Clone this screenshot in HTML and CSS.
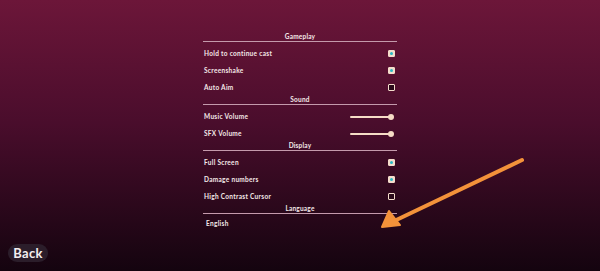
FILE: index.html
```html
<!DOCTYPE html>
<html lang="en">
<head>
    <meta charset="UTF-8">
    <meta name="viewport" content="width=device-width, initial-scale=1.0">
    <title>Settings</title>
    <link rel="stylesheet" href="styles.css">
</head>
<body>
    <div class="panel">
        <div class="section-title">Gameplay</div>
        <div class="section">
            <div class="row"><span>Hold to continue cast</span><span class="check on"></span></div>
            <div class="row"><span>Screenshake</span><span class="check on"></span></div>
            <div class="row"><span>Auto Aim</span><span class="check"></span></div>
        </div>
        <div class="section-title">Sound</div>
        <div class="section">
            <div class="row"><span>Music Volume</span><span class="slider"><span class="knob"></span></span></div>
            <div class="row"><span>SFX Volume</span><span class="slider"><span class="knob"></span></span></div>
        </div>
        <div class="section-title">Display</div>
        <div class="section">
            <div class="row"><span>Full Screen</span><span class="check on"></span></div>
            <div class="row"><span>Damage numbers</span><span class="check on"></span></div>
            <div class="row"><span>High Contrast Cursor</span><span class="check"></span></div>
        </div>
        <div class="section-title">Language</div>
        <div class="section">
            <div class="row lang"><span>English</span></div>
        </div>
    </div>

    <button class="back">Back</button>

    <svg class="arrow" width="600" height="271" viewBox="0 0 600 271">
        <line x1="522" y1="160" x2="390" y2="223" stroke="#f3923a" stroke-width="4" stroke-linecap="round"/>
        <polygon points="382,227 389,211 400,225" fill="#f3923a" stroke="#f3923a" stroke-width="2" stroke-linejoin="round"/>
    </svg>
</body>
</html>
```

FILE: styles.css
```css
body {
    margin: 0;
    width: 600px;
    height: 271px;
    overflow: hidden;
    font-family: Lato, "Open Sans", sans-serif;
    font-weight: bold;
    color: #f4e8e8;
    background: linear-gradient(#6c1639, #4a0d2c 45%, #14040f);
}
.panel {
    width: 194px;
    margin: 0 auto;
    padding-top: 33px;
}
.section-title {
    height: 8px;
    line-height: 8px;
    font-size: 6.5px;
    letter-spacing: 0.2px;
    text-align: center;
    border-bottom: 1px solid #c49aac;
}
.section {
    padding-top: 3px;
}
.section:last-child {
    padding-top: 1px;
}
.row {
    height: 17px;
    display: flex;
    align-items: center;
    justify-content: space-between;
    padding-left: 1px;
    padding-right: 2px;
    font-size: 6.5px;
    letter-spacing: 0.3px;
}
.row.lang {
    padding-left: 3px;
}
.check {
    width: 5px;
    height: 5px;
    border: 1px solid #f4dccb;
    border-radius: 1px;
    background: #2a0a1a;
    position: relative;
}
.check.on {
    background: #f4dccb;
}
.check.on::after {
    content: "";
    position: absolute;
    left: 1px;
    top: 1px;
    width: 3px;
    height: 3px;
    border-radius: 50%;
    background: #27b9c4;
}
.slider {
    width: 42px;
    height: 2px;
    background: #f6dcc6;
    border-radius: 1px;
    position: relative;
    margin-right: 3px;
}
.knob {
    position: absolute;
    right: -2px;
    top: -2px;
    width: 6px;
    height: 6px;
    border-radius: 50%;
    background: #f6dcc6;
}
.back {
    position: absolute;
    left: 8px;
    top: 244px;
    width: 40px;
    height: 18px;
    border: none;
    border-radius: 9px;
    background: #2b1d2a;
    color: #f4eef0;
    font-family: Lato, sans-serif;
    font-weight: bold;
    font-size: 13px;
    padding: 0;
    letter-spacing: 0.3px;
}
.arrow {
    position: absolute;
    left: 0;
    top: 0;
}
```
